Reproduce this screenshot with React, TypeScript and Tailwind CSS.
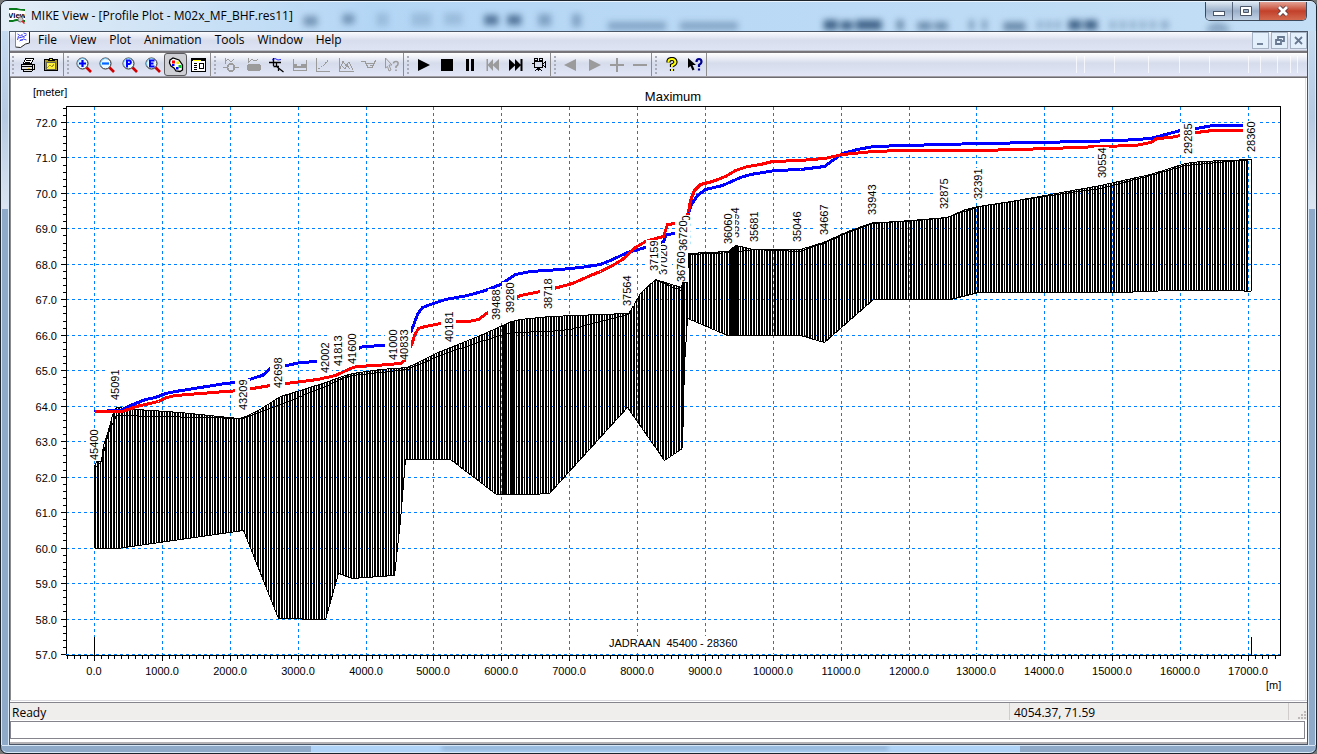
import React from 'react';
import { clsx } from 'clsx';

type Point = [number, number];

interface StationLabel {
  text: string;
  x: number;
  y: number;
}

const menus = ['File', 'View', 'Plot', 'Animation', 'Tools', 'Window', 'Help'];

/* ---------- profile data, in chart units ---------- */

const groundTop: Point[] = [
  [94, 466], [96, 461], [101, 461], [103, 445], [108, 430], [112, 415], [116, 407], [136, 409],
  [180, 412], [238, 418], [243, 417], [258, 410], [280, 396], [300, 390], [325, 382], [342, 376],
  [352, 373], [380, 369], [407, 367], [440, 351], [480, 335], [511, 321], [520, 319], [550, 316],
  [600, 314], [628, 313], [632, 307], [640, 293], [655, 279], [668, 283], [681, 287], [682, 282],
  [687, 282], [688, 253], [728, 251], [735, 245], [745, 247], [752, 249], [800, 249], [823, 242],
  [850, 230], [873, 222], [905, 221], [947, 217], [965, 209], [978, 206], [1000, 203], [1050, 194],
  [1100, 185], [1150, 174], [1185, 163], [1200, 161], [1251, 159],
];

const bankLine: Point[] = [
  [94, 468], [101, 461], [108, 432], [116, 415], [200, 417], [243, 418], [280, 404], [300, 396],
  [325, 386], [342, 378], [352, 375], [380, 372], [407, 369], [440, 355], [480, 341], [511, 332],
  [549, 331], [570, 329], [600, 321], [628, 314], [640, 293], [655, 279], [668, 285], [681, 290],
  [682, 282], [687, 282], [688, 254], [735, 252], [752, 249], [800, 251], [823, 243], [850, 231],
  [873, 223], [947, 217], [978, 206], [1050, 195], [1100, 188], [1150, 175], [1185, 165], [1251, 159],
];

const bedLine: Point[] = [
  [94, 548], [117, 548], [243, 530], [278, 618], [325, 619], [338, 573], [352, 578], [394, 575],
  [400, 520], [405, 459], [450, 459], [496, 494], [530, 494], [549, 493], [627, 407], [664, 460],
  [682, 448], [684, 365], [687, 318], [692, 320], [727, 335], [800, 335], [824, 342], [873, 299],
  [950, 299], [978, 292], [1120, 292], [1170, 290], [1235, 290], [1251, 291],
];

const blueLine: Point[] = [
  [94, 411], [120, 410], [130, 405], [145, 399], [155, 397], [165, 393], [175, 391], [200, 387],
  [225, 383], [243, 381], [258, 376], [262, 375], [270, 368], [278, 366], [286, 365], [300, 362],
  [317, 361], [340, 355], [363, 346], [384, 345], [400, 344], [411, 330], [417, 314], [422, 307],
  [430, 304], [445, 299], [467, 295], [485, 290], [500, 284], [512, 276], [515, 274], [530, 271],
  [560, 269], [580, 267], [600, 264], [612, 259], [627, 252], [645, 247], [663, 241], [666, 234],
  [675, 233], [685, 225], [688, 213], [691, 204], [697, 195], [705, 189], [722, 185], [740, 177],
  [750, 174], [775, 170], [800, 169], [824, 166], [832, 160], [842, 153], [857, 149], [873, 146],
  [905, 145], [980, 143], [1040, 142], [1120, 140], [1150, 138], [1165, 134], [1180, 130],
  [1196, 128], [1212, 125], [1243, 125],
];

const redLine: Point[] = [
  [94, 411], [122, 411], [136, 406], [158, 401], [166, 397], [175, 395], [200, 393], [225, 391],
  [240, 390], [270, 385], [286, 383], [317, 379], [335, 375], [350, 368], [356, 366], [375, 365],
  [400, 363], [404, 360], [412, 342], [414, 335], [418, 328], [425, 326], [440, 323], [450, 321],
  [468, 321], [478, 319], [486, 313], [496, 306], [510, 300], [520, 295], [530, 293], [545, 290],
  [557, 287], [572, 283], [590, 275], [600, 271], [612, 265], [622, 259], [635, 247], [645, 241],
  [655, 238], [663, 236], [667, 224], [675, 223], [682, 222], [688, 212], [690, 200], [694, 190],
  [700, 184], [712, 181], [725, 176], [735, 170], [747, 166], [760, 164], [772, 161], [800, 160],
  [824, 158], [842, 154], [873, 151], [900, 150], [980, 150], [1050, 148], [1100, 146], [1135, 145],
  [1150, 142], [1157, 138], [1170, 137], [1180, 135], [1196, 132], [1212, 130], [1243, 130],
];

const stations: StationLabel[] = [
  { text: '28360', x: 1251, y: 152 },
  { text: '29285', x: 1188, y: 154 },
  { text: '30554', x: 1102, y: 178 },
  { text: '32391', x: 978, y: 199 },
  { text: '32875', x: 944, y: 209 },
  { text: '33943', x: 872, y: 215 },
  { text: '34667', x: 824, y: 235 },
  { text: '35046', x: 797, y: 242 },
  { text: '35681', x: 754, y: 242 },
  { text: '35994', x: 735, y: 238 },
  { text: '36060', x: 728, y: 244 },
  { text: '36700', x: 686, y: 246 },
  { text: '36720', x: 683, y: 251 },
  { text: '36760', x: 681, y: 282 },
  { text: '37020', x: 663, y: 275 },
  { text: '37159', x: 654, y: 271 },
  { text: '37564', x: 627, y: 306 },
  { text: '38718', x: 548, y: 309 },
  { text: '39280', x: 510, y: 313 },
  { text: '39488', x: 496, y: 320 },
  { text: '40181', x: 449, y: 342 },
  { text: '40833', x: 404, y: 360 },
  { text: '41000', x: 393, y: 360 },
  { text: '41600', x: 352, y: 364 },
  { text: '41813', x: 338, y: 366 },
  { text: '42002', x: 325, y: 373 },
  { text: '42698', x: 278, y: 388 },
  { text: '43209', x: 243, y: 410 },
  { text: '45091', x: 115, y: 400 },
  { text: '45400', x: 94, y: 460 },
];

const toX = (distance: number) => Math.round(94 + distance * 0.06788);
const toY = (level: number) => Math.round(654 - (level - 57) * 35.47);

function levelAt(line: Point[], x: number) {
  for (let i = 1; i < line.length; i++) {
    const [x0, y0] = line[i - 1];
    const [x1, y1] = line[i];
    if (x <= x1) return Math.round(y0 + ((y1 - y0) * (x - x0)) / (x1 - x0));
  }
  return line[line.length - 1][1];
}

const toPath = (line: Point[]) => 'M' + line.map(([x, y]) => `${x + 0.5} ${y + 0.5}`).join('L');

const bar = (x: number) => `M${x + 0.5} ${levelAt(groundTop, x)}V${levelAt(bedLine, x)}`;

function hatchPath() {
  let d = '';
  let x = 94;
  let i = 0;
  while (x <= 1247) {
    const solid = (x >= 728 && x < 736) || (x >= 681 && x < 684);
    const dense = x >= 496 && x < 514;
    // every third bar is a thin one
    const thin = i % 3 === 2;
    d += bar(x);
    if (!thin || solid) d += bar(x + 1);
    if (solid || (dense && i % 3 === 0)) d += bar(x + 2);
    x += thin ? 2 : 3;
    i++;
  }
  return d + 'M1251.5 159V291';
}

function ProfileChart() {
  const levels = Array.from({ length: 16 }, (_, i) => 57 + i);
  const distances = Array.from({ length: 18 }, (_, i) => i * 1000);
  const minorLevels = Array.from({ length: 78 }, (_, i) => 57 + i * 0.2);
  const minorDistances = Array.from({ length: 179 }, (_, i) => (i - 4) * 100);

  return (
    <svg
      viewBox="11 78 1294 622"
      className="block h-full w-full font-['Liberation_Sans',Arial,sans-serif] text-[11px]"
      role="img"
      aria-label="Profile plot, maximum water level"
    >
      <g shapeRendering="crispEdges" stroke="#0080ff" strokeDasharray="3 3">
        {distances.map((d) => (
          <line key={d} x1={toX(d) + 0.5} x2={toX(d) + 0.5} y1={107} y2={654} />
        ))}
        {levels.slice(1).map((l) => (
          <line key={l} x1={66} x2={1280} y1={toY(l) + 0.5} y2={toY(l) + 0.5} />
        ))}
      </g>

      <g shapeRendering="crispEdges" stroke="#000" fill="none">
        <rect x={66.5} y={106.5} width={1214} height={549} />
        {minorLevels.map((l) => (
          <line key={l} x1={63} x2={66} y1={toY(l) + 0.5} y2={toY(l) + 0.5} />
        ))}
        {levels.map((l) => (
          <line key={l} x1={61} x2={66} y1={toY(l) + 0.5} y2={toY(l) + 0.5} />
        ))}
        {minorDistances.map((d) => (
          <line key={d} x1={toX(d) + 0.5} x2={toX(d) + 0.5} y1={656} y2={659} />
        ))}
        {distances.map((d) => (
          <line key={d} x1={toX(d) + 0.5} x2={toX(d) + 0.5} y1={656} y2={661} />
        ))}
        <path d="M94.5 637V655M1251.5 637V655" />
        <path d={hatchPath()} />
        <path d={toPath(groundTop)} />
        <path d={toPath(bankLine)} />
        <path d={toPath(bedLine)} />
      </g>
      <line x1={66} x2={1280} y1={654.5} y2={654.5} stroke="#0080ff" strokeDasharray="3 3" shapeRendering="crispEdges" />

      <g fill="none" strokeWidth={3} strokeLinejoin="round" shapeRendering="crispEdges">
        <path d={toPath(blueLine)} stroke="#00f" />
        <path d={toPath(redLine)} stroke="#f00" />
      </g>

      {stations.map((s) => (
        <g key={s.text}>
          <rect x={s.x - 8} y={s.y - 31} width={15} height={31} fill="#fff" />
          <text transform={`translate(${s.x + 4} ${s.y}) rotate(-90)`}>{s.text}</text>
        </g>
      ))}

      {levels.map((l) => (
        <text key={l} x={57} y={toY(l) + 5} textAnchor="end">{l.toFixed(1)}</text>
      ))}
      {distances.map((d) => (
        <text key={d} x={toX(d)} y={675} textAnchor="middle">{d.toFixed(1)}</text>
      ))}
      <text x={33} y={96}>[meter]</text>
      <text x={1266} y={689}>[m]</text>
      <text x={673} y={101} textAnchor="middle" className="text-[13px]">Maximum</text>
      <rect x={608} y={636} width={128} height={14} fill="#fff" />
      <text x={609} y={647} className="whitespace-pre">JADRAAN  45400 - 28360</text>
    </svg>
  );
}

/* ---------- toolbar ---------- */

function Icon({ children, crisp = true }: { children: React.ReactNode; crisp?: boolean }) {
  return (
    <svg viewBox="0 0 16 16" className="size-4" fill="none" shapeRendering={crisp ? 'crispEdges' : 'auto'} aria-hidden>
      {children}
    </svg>
  );
}

function Magnifier({ children }: { children: React.ReactNode }) {
  return (
    <Icon crisp={false}>
      <circle cx="6.5" cy="6.5" r="5.5" fill="#e8f8ff" stroke="#222" />
      <path d="M2.200 9A5 5 0 0 1 9 2.200" stroke="#7cf" />
      <path d="M10.500 10.500L15 15" stroke="#d00000" strokeWidth="2.600" />
      {children}
    </Icon>
  );
}

const gray = '#9b9b9b';

const toolGroups: { name: string; icon: React.ReactNode; pressed?: boolean }[][] = [
  [
    {
      name: 'Print',
      icon: (
        <Icon>
          <path d="M5.5 1.5H13.5L11.5 6.5H3.5Z" fill="#fff" stroke="#000" />
          <path d="M6 3.5H11M5 5.5H10" stroke="#000" />
          <path d="M1.5 7.5H14.5V12.5H1.5ZM3.5 12.5V14.5H11.5L14.5 11.5" fill="#e0e0e0" stroke="#000" />
          <path d="M1 9.5H13M12.5 7V13" stroke="#000" />
          <path d="M8 11.5H10" stroke="#fc0" />
        </Icon>
      ),
    },
    {
      name: 'Copy to clipboard',
      icon: (
        <Icon>
          <path d="M1.5 2.5H14.5V13.5H1.5Z" fill="#a89a20" stroke="#000" />
          <path d="M5 3.5V2H6.5V1H9.5V2H11V3.5Z" fill="#ff3" stroke="#000" />
          <path d="M3.5 5.5H12.5V12.5H3.5Z" fill="#fff23a" stroke="#665" />
          <path d="M4 11L7 8L9 10L11 7" stroke="#a89a20" />
        </Icon>
      ),
    },
  ],
  [
    { name: 'Zoom in', icon: <Magnifier><path d="M3 6.5H10M6.500 3V10" stroke="#00f" strokeWidth="2.200" /></Magnifier> },
    { name: 'Zoom out', icon: <Magnifier><path d="M3 6.5H10" stroke="#06f" strokeWidth="2.200" /></Magnifier> },
    { name: 'Previous zoom', icon: <Magnifier><path d="M5 10.5V3.500H7.500A1.800 1.800 0 0 1 7.500 7H5" stroke="#00f" strokeWidth="2" /></Magnifier> },
    { name: 'Zoom extents', icon: <Magnifier><path d="M9.500 3.500H5V9.500H9.500M5 6.500H8.500" stroke="#00f" strokeWidth="2" /></Magnifier> },
    {
      name: 'Colours',
      pressed: true,
      icon: (
        <Icon crisp={false}>
          <path d="M2 3L5 1L11 3L14.5 8V13L12 14.5L8 14L6 11L3 9L1.5 6Z" fill="#fff" stroke="#000" strokeWidth="1.3" />
          <path d="M4 3.5H7V6.5H4Z" fill="#f00" />
          <path d="M8.500 4.500H11V7H8.500Z" fill="#ee0" />
          <path d="M4 7H6.500V9H4Z" fill="#00f" />
          <path d="M10.500 8H13.500V11H10.500Z" fill="#00c020" />
          <path d="M8 10H10.500V12.500H8Z" fill="#00f" />
        </Icon>
      ),
    },
    {
      name: 'Options',
      icon: (
        <Icon>
          <path d="M.5 1.5H14.5V14.5H.5Z" fill="#fff" stroke="#000" />
          <path d="M1 3H14" stroke="#000" strokeWidth="2" />
          <path d="M2 3.5H10" stroke="#ff0" />
          <path d="M2.5 6.5H6M2.5 8.5H6M2.5 10.5H6M2.5 12.5H6" stroke="#000" />
          <path d="M8.5 6.5H12.5V11.5H8.5Z" stroke="#000" />
        </Icon>
      ),
    },
  ],
  [
    { name: 'Points', icon: <Icon><path d="M2.5 1V7M2 4.5L5 2.5L8 4.5L11 2.500M0 10.500H4M12 10.500H16" stroke={gray} /><circle cx="8" cy="10.5" r="3.5" stroke={gray} strokeWidth="2" /></Icon> },
    { name: 'Cross sections', icon: <Icon><path d="M2.5 1V6M3 4.5L6 2.5L9 4L12 2.500" stroke={gray} /><rect x="1" y="7" width="14" height="7" rx="3" fill={gray} /></Icon> },
    { name: 'Profile', icon: <Icon crisp={false}><path d="M3 3L6 1.500L9 3L12 2.500" stroke="#22f" /><path d="M0 5.500H12M4.500 1V9M4.500 9.500H10M7.500 5.500V9.500L14.500 15M9.500 10.500V14" stroke="#000" strokeWidth="1.300" /></Icon> },
    { name: 'Time series', icon: <Icon><path d="M1.5 2V14M1 13.5H15M14.5 3V14" stroke={gray} /><path d="M2 7H5V9H9V7H15V11H2Z" fill={gray} /></Icon> },
    { name: 'Relation', icon: <Icon><path d="M1.5 1V14.5H15" stroke={gray} /><path d="M3 12L6 10L9 8L14 2" stroke={gray} strokeDasharray="2 1" /></Icon> },
    { name: 'Rating', icon: <Icon><path d="M1.5 1V14.5H16M2 12L5 4L8 9L11 5L15 13M3 8L7 12L9 8L12 12" stroke={gray} /></Icon> },
    { name: 'Section', icon: <Icon><path d="M0 4.5H4L7 10.5H11L14 4.5V3M6 6.5H14M9 8.5H13" stroke={gray} /></Icon> },
    { name: 'Query', icon: <Icon crisp={false}><path d="M1.5 1L8 8H5L7 13L5 14L3.5 9.5L1.5 11Z" stroke={gray} /><path d="M9.5 6.5Q9.5 4.5 12 4.5T14 7Q14 8.5 12 9.5V11M12 12.5V14" stroke={gray} strokeWidth="1.6" /></Icon> },
  ],
  [
    { name: 'Play', icon: <Icon crisp={false}><path d="M2 2L14 8L2 14Z" fill="#000" /></Icon> },
    { name: 'Stop', icon: <Icon><path d="M2 2H14V14H2Z" fill="#000" /></Icon> },
    { name: 'Pause', icon: <Icon><path d="M4 2H7V14H4ZM9 2H12V14H9Z" fill="#000" /></Icon> },
    { name: 'Rewind', icon: <Icon crisp={false}><path d="M1.5 2H3V7.5L8 2V7.5L14 2V14L8 8.5V14L3 8.5V14H1.5Z" fill={gray} /></Icon> },
    { name: 'Fast forward', icon: <Icon crisp={false}><path d="M1 2L7 7.5V2L12.5 7.5V2H14.5V14H12.5V8.5L7 14V8.5L1 14Z" fill="#000" /></Icon> },
    { name: 'Record', icon: <Icon><path d="M3.5 4.5H11.5V10.5H3.5ZM12 6.5L14.5 5V10L12 8.5M1 6.5H3M7.5 11V14M7 11L3.5 14.5M8 11L11.5 14.5M5 12.5H10" stroke="#000" /><path d="M3.500 1.500H6.500V3.500H3.500ZM8.500 1.500H11.500V3.500H8.500Z" stroke="#000" /></Icon> },
  ],
  [
    { name: 'Step back', icon: <Icon crisp={false}><path d="M13 2V14L1 8Z" fill={gray} /></Icon> },
    { name: 'Step forward', icon: <Icon crisp={false}><path d="M3 2V14L15 8Z" fill={gray} /></Icon> },
    { name: 'Add', icon: <Icon><path d="M1 8H15M8 1V15" stroke={gray} strokeWidth="2" /></Icon> },
    { name: 'Remove', icon: <Icon><path d="M1 8H15" stroke={gray} strokeWidth="2" /></Icon> },
  ],
  [
    { name: 'About', icon: <Icon crisp={false}><path d="M4.5 5.5V4Q5 2 8 2T11.5 5Q11.5 7 8 8.5V10M8 12V14" stroke="#000" strokeWidth="4.2" /><path d="M4.5 5.5V4Q5 2 8 2T11.5 5Q11.5 7 8 8.5V10M8 12V14" stroke="#ff0" strokeWidth="2" /></Icon> },
    { name: 'Context help', icon: <Icon crisp={false}><path d="M1 1V11L3.5 9L5.5 13.5L7.5 12.5L5.5 8H9Z" fill="#000" /><path d="M9.5 5Q9.5 2 12 2T14.5 5Q14.5 6.5 12 8V10M12 11.5V13.5" stroke="#000090" strokeWidth="2.2" /></Icon> },
  ],
];

function Toolbar() {
  return (
    <div className="flex h-[23px] shrink-0 bg-linear-to-b from-white via-[#d6dcec] via-45% to-[#e2e6f6]">
      {toolGroups.map((group, g) => (
        <div key={g} role="toolbar" className={clsx('flex border-r border-[#8d8d90]', g === 0 && 'pr-px')}>
          <div className={clsx('flex flex-col items-center justify-center gap-[2px]', g === 0 ? 'w-[6px]' : 'w-2')}>
            {[0, 1, 2, 3, 4].map((n) => (
              <span key={n} className="size-[2px] bg-[#a9adba]" />
            ))}
          </div>
          {group.map((tool) => (
            <button
              key={tool.name}
              type="button"
              aria-label={tool.name}
              className={clsx(
                'flex w-[23px] items-center justify-center',
                tool.pressed && 'rounded-[3px] border border-[#5b5b5f] bg-[#cfd0d6]'
              )}
            >
              {tool.icon}
            </button>
          ))}
        </div>
      ))}
      <div className="ml-auto flex py-[3px] pr-[9px]" aria-hidden>
        <span className="w-2 border-l border-white/70" />
        <span className="w-[30px] border-l border-white/70" />
        <span className="w-[34px] border-l border-white/70" />
        <span className="w-[31px] border-l border-white/70" />
        <span className="w-[30px] border-l border-white/70" />
        <span className="w-[39px] border-l border-white/70" />
        <span className="w-3 border-l border-white/70" />
        <span className="w-[17px] border-l border-white/70" />
        <span className="w-[13px] border-l border-white/70" />
        <span className="w-2 border-x border-white/70" />
      </div>
    </div>
  );
}

/* ---------- window frame ---------- */

// what shows through the glass title bar
function GlassBackdrop() {
  return (
    <svg viewBox="0 0 1317 31" preserveAspectRatio="xMinYMin slice" className="absolute inset-0 h-full w-full" aria-hidden>
      <g fill="#33567c" className="blur-[3px]">
        <path d="M303 14h14v10h-14ZM342 12h12v10h-12Z" opacity=".5" />
        <path d="M376 11h12v13h-12ZM411 11h20v13h-20ZM444 11h18v12h-18Z" opacity=".2" />
        <path d="M484 13h14v10h-14ZM507 13h14v10h-14Z" opacity=".75" />
        <path d="M538 12h13v12h-13ZM572 12h9v13h-9Z" opacity=".4" />
        <path d="M608 20h58v8h-58ZM680 20h58v8h-58Z" opacity=".4" />
        <path d="M824 18h14v10h-14ZM841 19h12v9h-12ZM856 18h26v10h-26ZM1069 18h13v10h-13ZM1085 18h13v10h-13Z" opacity=".9" />
        <path d="M897 18h7v10h-7ZM918 20h14v8h-14ZM935 20h13v8h-13ZM970 18h4v10h-4ZM983 18h4v10h-4ZM1004 20h22v9h-22Z" opacity=".6" />
        <path d="M1038 19h5v8h-5ZM1047 19h5v8h-5ZM1056 19h5v8h-5ZM1111 19h5v8h-5ZM1121 19h5v8h-5ZM1131 19h5v8h-5ZM1141 19h5v8h-5ZM1151 19h5v8h-5ZM1162 19h7v8h-7Z" opacity=".4" />
        <path d="M1208 25q10-9 22 0v6h-22Z" opacity=".4" />
      </g>
    </svg>
  );
}

function TitleBar() {
  return (
    <header className="relative flex h-[30px] shrink-0 overflow-hidden rounded-t-[6px] border-t border-[#e8f3fd] bg-linear-to-r from-[#e3edf6] via-[#b4d6f5] via-28% to-[#c3def5]">
      <GlassBackdrop />
      <div className="relative flex items-center gap-[6px] pb-[2px] pl-2">
        <svg viewBox="0 0 16 16" className="size-4" aria-hidden>
          <path d="M0 2H16V13H0Z" fill="#fff" />
          <path d="M0 1H8Q11 2 16 2M0 13H4Q8 11 12 13H16" fill="none" stroke="#087a1c" strokeWidth="1.8" />
          <text x="-1" y="10" className="font-['Liberation_Sans',Arial,sans-serif] text-[8px] font-bold" fill="#002">View</text>
          <circle cx="11.5" cy="11.5" r="2.5" fill="#ccc" stroke="#777" />
          <path d="M13 13L15.5 15.5" stroke="#d22" strokeWidth="1.5" />
        </svg>
        <h1 className="text-[12px] leading-4 whitespace-nowrap">MIKE View - [Profile Plot - M02x_MF_BHF.res11]</h1>
      </div>
      <div className="relative mr-[9px] ml-auto flex h-[19px] overflow-hidden rounded-b-[5px] border border-t-0 border-[#3d4a5c]">
        <button type="button" aria-label="Minimize" className="flex w-[27px] items-center justify-center border-r border-[#56657a] bg-linear-to-b from-[#dbe6f2] via-[#9bafc9] via-50% to-[#c3d4e7]">
          <svg viewBox="0 0 12 12" className="size-3" aria-hidden><rect x=".5" y="6.5" width="11" height="4" fill="#fff" stroke="#4b5568" /></svg>
        </button>
        <button type="button" aria-label="Maximize" className="flex w-[27px] items-center justify-center border-r border-[#56657a] bg-linear-to-b from-[#dbe6f2] via-[#9bafc9] via-50% to-[#c3d4e7]">
          <svg viewBox="0 0 12 12" className="size-3" aria-hidden><path fillRule="evenodd" d="M.5 1.5H11.5V10.5H.5ZM3.500 4.500H8.500V7.500H3.500Z" fill="#fff" stroke="#4b5568" /></svg>
        </button>
        <button type="button" aria-label="Close" className="flex w-[46px] items-center justify-center bg-linear-to-b from-[#e2a194] via-[#c2402b] via-50% to-[#d3694f]">
          <svg viewBox="0 0 12 12" className="size-3" aria-hidden>
            <path d="M2 2L10 10M10 2L2 10" stroke="#4c3a44" strokeWidth="4.5" />
            <path d="M2 2L10 10M10 2L2 10" stroke="#fff" strokeWidth="2.8" />
          </svg>
        </button>
      </div>
    </header>
  );
}

const mdiButtons = [
  { name: 'Minimize document', d: 'M2 9H8' },
  { name: 'Restore document', d: 'M4 4V2H10V6H8M2 5H7V9H2Z' },
  { name: 'Close document', d: 'M2 2L9 9M9 2L2 9' },
];

function MenuBar() {
  return (
    <nav className="flex h-[18px] shrink-0 items-stretch bg-linear-to-b from-[#fafbfe] via-[#d8dded] via-45% to-[#dfe4f4]">
      <svg viewBox="0 0 16 16" className="ml-1 h-4 w-[17px]" aria-hidden>
        <path d="M1 0H15V11L11 12L6 15.5H1Z" fill="#fff" />
        <path d="M15 0V11L11 12L6 15.5L1 15" fill="none" stroke="#222" />
        <path d="M1 0V15" stroke="#888" />
        <path d="M3 2L6 4L8 2M4 6L8 5L12 3M5 9L9 7L12 8M7 3L10 6M4 4L3 8M9 1L12 2M6 7L8 9" fill="none" stroke="#44f" />
      </svg>
      <div className="flex gap-[13px] pb-[2px] pl-[7px]">
        {menus.map((menu) => (
          <button key={menu} type="button" className="text-[12px] leading-4">{menu}</button>
        ))}
      </div>
      <div className="ml-auto flex gap-[2px]">
        {mdiButtons.map((b) => (
          <button key={b.name} type="button" aria-label={b.name} className="flex h-[17px] w-[17px] items-center justify-center border border-[#a5b2c4] bg-[#e3effb]">
            <svg viewBox="0 0 11 11" className="size-[11px]" aria-hidden>
              <path d={b.d} fill="none" stroke="#68788f" strokeWidth="1.8" />
            </svg>
          </button>
        ))}
      </div>
    </nav>
  );
}

function StatusBar() {
  return (
    <footer className="shrink-0 bg-[#f0eded]">
      <div className="flex h-[18px] border-b border-white text-[12px] leading-5">
        <span className="flex-1 pl-[2px]">Ready</span>
        <span className="w-[279px] border-l border-[#d0cccc] pl-1">4054.37, 71.59</span>
        <span className="flex w-[19px] items-end justify-end border-l border-[#d0cccc]">
          <svg viewBox="0 0 10 10" className="size-[10px]" fill="#bdb9b9" shapeRendering="crispEdges" aria-hidden>
            <path d="M7 1h2v2h-2ZM7 4h2v2h-2ZM7 7h2v2h-2ZM4 4h2v2h-2ZM4 7h2v2h-2ZM1 7h2v2h-2Z" />
          </svg>
        </span>
      </div>
      <div className="h-[23px] border-b-2 border-[#b4b2b5] bg-white pr-[2px]">
        <input type="text" readOnly aria-label="Messages" className="block h-[18px] w-full border border-[#85848c] bg-white px-1 text-[12px] outline-none" />
      </div>
    </footer>
  );
}

function SideGlass() {
  return (
    <div className="w-2 shrink-0 border-x border-[#d8e8f6] bg-[linear-gradient(to_bottom,#c6dbf0_0%,#b6cae2_12%,#dbe5f1_25%,#8eaac8_25%)]" />
  );
}

export default function App() {
  return (
    <div className="h-screen bg-[#777] font-['Open_Sans','Noto_Sans',sans-serif] text-black">
      <div className="flex h-full flex-col rounded-[7px] border border-[#1e242c] bg-[#8eaac8]">
        <TitleBar />
        <div className="flex min-h-0 flex-1">
          <SideGlass />
          <main className="flex min-w-0 flex-1 flex-col border border-[#4a5666] bg-white">
            <MenuBar />
            <div className="h-[3px] shrink-0 border-t border-b-2 border-t-[#b9bdc8] border-b-[#77757a]" />
            <Toolbar />
            <div className="h-[2px] shrink-0 border-t border-[#a0a0a4] bg-[#6d6b70]" />
            <section className="mr-px min-h-0 flex-1 border-x border-l-[#8b8b8b] border-r-[#dedede] bg-white">
              <ProfileChart />
            </section>
            <div className="h-[3px] shrink-0 border-t border-b border-t-[#d9d9df] border-b-[#85848c]" />
            <StatusBar />
          </main>
          <SideGlass />
        </div>
        <div className="mx-px flex h-2 shrink-0 overflow-hidden rounded-b-[6px] border-y border-[#d8e8f6]">
          <div className="w-[23.5%] bg-[#8eaac8]" />
          <div className="flex-1 overflow-hidden bg-[#b0d4f7] px-[10%]">
            <div className="h-1 w-full bg-[#45668c] opacity-35 blur-[2px]" />
          </div>
          <div className="w-[22.5%] bg-[#8eaac8]" />
        </div>
      </div>
    </div>
  );
}
